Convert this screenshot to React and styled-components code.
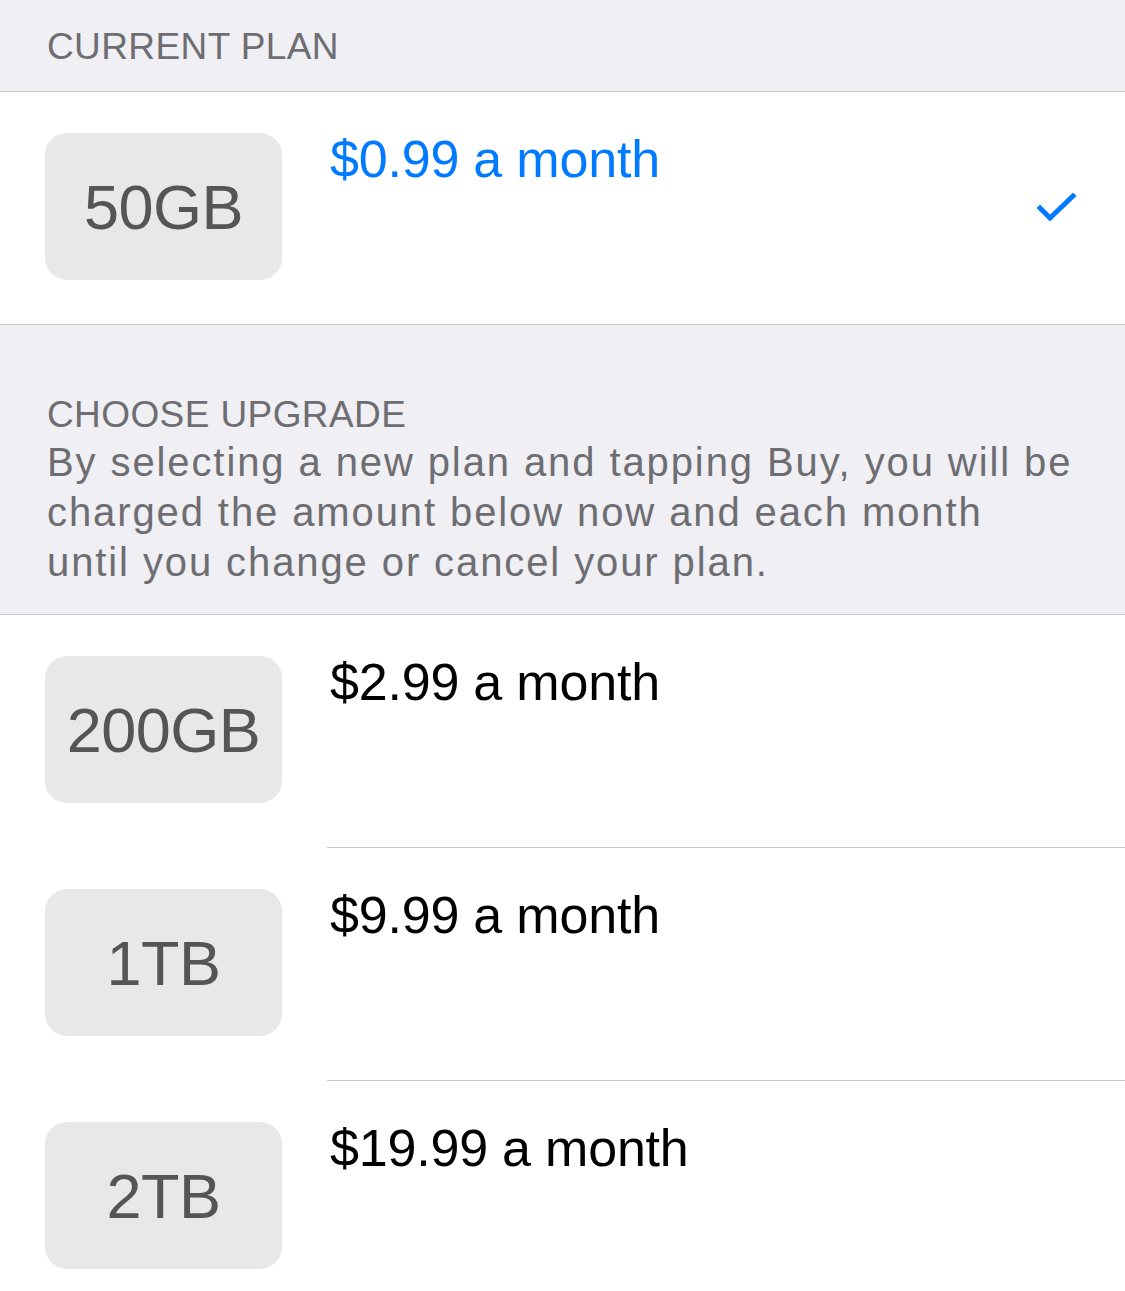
import styled, { createGlobalStyle } from "styled-components";

const GlobalStyle = createGlobalStyle`
    html, body {
        margin: 0;
        padding: 0;
        background: #ffffff;
    }
    body {
        font-family: "Liberation Sans", Arial, sans-serif;
        -webkit-font-smoothing: antialiased;
    }
`;

const Page = styled.div`
    width: 1125px;
    height: 1291px;
    overflow: hidden;
    background: #ffffff;
`;

const SectionHeader = styled.div`
    background: #efeff4;
    padding: ${(p) => p.$padding};
    border-bottom: 1px solid #c8c7cc;
    color: #6d6d72;
`;

const HeaderTitle = styled.div`
    font-size: 37px;
    line-height: 44px;
    letter-spacing: 0.4px;
`;

const NoteLine = styled.div`
    font-size: 40px;
    line-height: 50px;
    letter-spacing: 1.9px;
    white-space: nowrap;
`;

const Group = styled.div`
    background: #ffffff;
    border-bottom: 1px solid #c8c7cc;
`;

const Row = styled.div`
    display: flex;
    align-items: flex-start;
    height: 232px;
    padding-left: 45px;
    position: relative;
    box-sizing: border-box;
`;

const Divider = styled.div`
    height: 1px;
    background: #c8c7cc;
    margin-left: 327px;
`;

const SizeBox = styled.div`
    width: 237px;
    height: 147px;
    margin-top: 41px;
    border-radius: 22px;
    background: #e8e8e8;
    display: flex;
    align-items: center;
    justify-content: center;
    color: #555555;
    font-size: 63px;
    letter-spacing: -0.5px;
    flex-shrink: 0;
`;

const Price = styled.div`
    margin-left: 48px;
    margin-top: 37px;
    font-size: 52px;
    line-height: 60px;
    letter-spacing: -0.2px;
    color: ${(p) => (p.$current ? "#007aff" : "#000000")};
    flex: 1;
`;

const Check = styled.svg`
    position: absolute;
    right: 48px;
    top: 101px;
`;

const noteLines = [
    "By selecting a new plan and tapping Buy, you will be",
    "charged the amount below now and each month",
    "until you change or cancel your plan.",
];

const plans = [
    { size: "200GB", price: "$2.99 a month" },
    { size: "1TB", price: "$9.99 a month" },
    { size: "2TB", price: "$19.99 a month" },
];

export default function App() {
    return (
        <Page>
            <GlobalStyle />
            <SectionHeader $padding="25px 47px 22px">
                <HeaderTitle>CURRENT PLAN</HeaderTitle>
            </SectionHeader>
            <Group>
                <Row>
                    <SizeBox>50GB</SizeBox>
                    <Price $current>$0.99 a month</Price>
                    <Check width="40" height="32" viewBox="0 0 40 32">
                        <path d="M3 15 L13 25 L36 3" fill="none" stroke="#007aff" strokeWidth="5" strokeLinecap="square" />
                    </Check>
                </Row>
            </Group>
            <SectionHeader $padding="68px 47px 27px">
                <HeaderTitle>CHOOSE UPGRADE</HeaderTitle>
                {noteLines.map((line) => (
                    <NoteLine key={line}>{line}</NoteLine>
                ))}
            </SectionHeader>
            {plans.map((plan, i) => (
                <div key={plan.size}>
                    {i > 0 && <Divider />}
                    <Row>
                        <SizeBox>{plan.size}</SizeBox>
                        <Price>{plan.price}</Price>
                    </Row>
                </div>
            ))}
        </Page>
    );
}
